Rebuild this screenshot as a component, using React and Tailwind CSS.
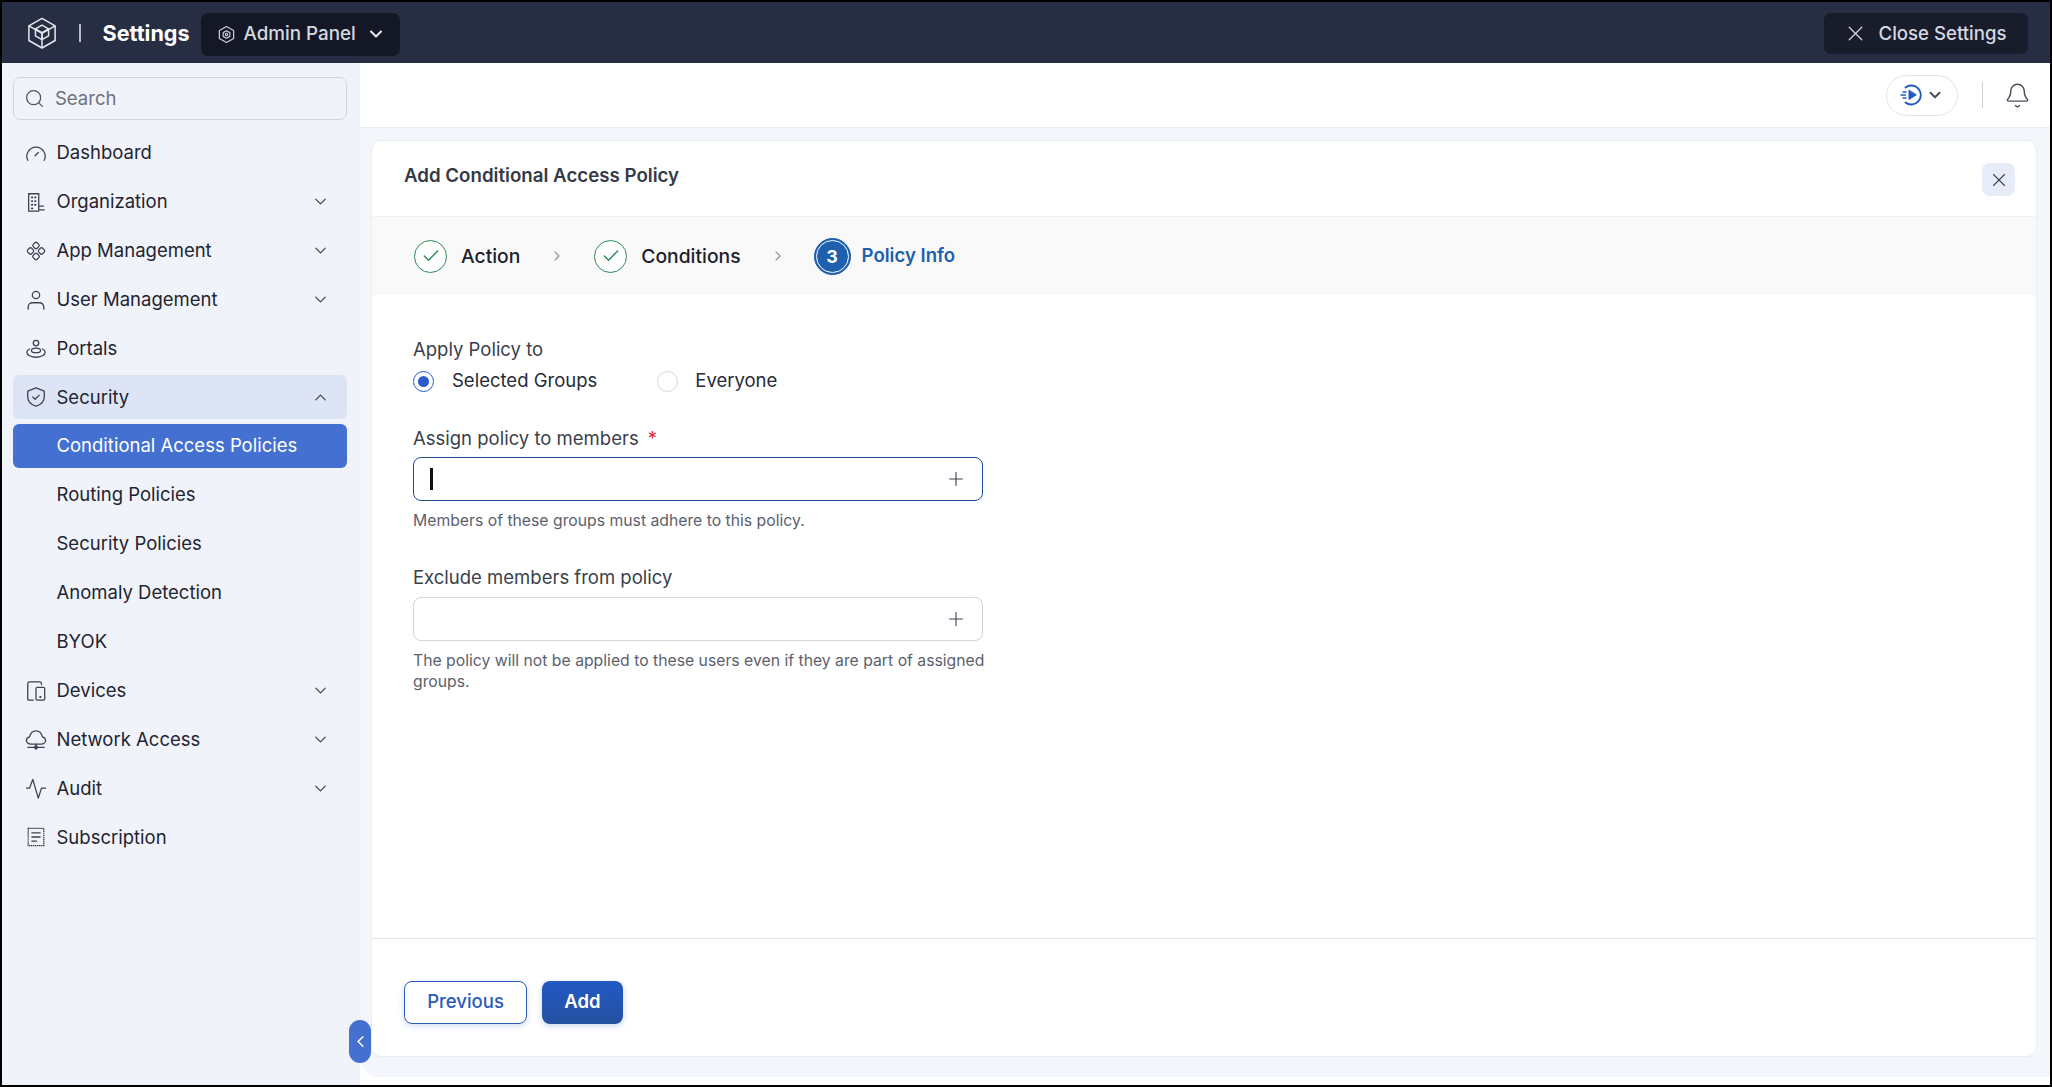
import React from "react";
import { ChevronDown, ChevronUp, ChevronRight, ChevronLeft, Search, X, Plus, Check, Bell } from "lucide-react";

const icon = "h-[22px] w-[22px] shrink-0 fill-none stroke-[#3c4250] stroke-[1.4]";

const LogoIcon = ({ className }) => (
  <svg viewBox="0 0 32 34" className={className} fill="none" stroke="currentColor" strokeWidth="1.6" strokeLinejoin="round">
    <path d="M16 1.5 30 9.5V25L16 33 2 25V9.5Z" />
    <path d="M2 9.5 16 17.5 30 9.5M16 17.5V33" />
    <path d="M16 8.5 23 12.5V20L16 24 9 20V12.5Z" />
    <path d="M9 12.5 16 16.5 23 12.5M16 16.5V24" />
  </svg>
);

const GaugeIcon = () => (
  <svg viewBox="0 0 24 24" className={icon}>
    <path d="M3 20a10 10 0 1 1 18 0" strokeLinecap="round" />
    <path d="m11 15 3.5-3.5" strokeLinecap="round" />
  </svg>
);
const OrgIcon = () => (
  <svg viewBox="0 0 24 24" className={icon}>
    <path d="M15 20.5V3H4v19h11M15 20.5h6M15 16.5h5" strokeLinecap="round" />
    <path d="M7.5 7h.5M11 7h.5M7.5 11h.5M11 11h.5M7.5 15h.5M11 15h.5M7.5 19h.5" strokeWidth="2" strokeLinecap="round" />
  </svg>
);
const AppIcon = () => (
  <svg viewBox="0 0 24 24" className={icon}>
    <rect x="9" y="3" width="6" height="6" rx="1.800" transform="rotate(45 12 6)" />
    <rect x="3" y="9" width="6" height="6" rx="1.800" transform="rotate(45 6 12)" />
    <rect x="15" y="9" width="6" height="6" rx="1.800" transform="rotate(45 18 12)" />
    <rect x="9" y="15" width="6" height="6" rx="1.800" transform="rotate(45 12 18)" />
  </svg>
);
const UserIcon = () => (
  <svg viewBox="0 0 24 24" className={icon}>
    <circle cx="12" cy="6.500" r="4" />
    <path d="M3.500 22v-2.500a4.500 4.500 0 0 1 4.500-4.500h8a4.500 4.500 0 0 1 4.500 4.500V22" strokeLinecap="round" />
  </svg>
);
const PortalIcon = () => (
  <svg viewBox="0 0 24 24" className={icon}>
    <circle cx="12" cy="5.500" r="3" />
    <path d="M7 13.500c0-1.500 1.500-2.500 5-2.500s5 1 5 2.500c0 1.500-2 2.500-5 2.500s-5-1-5-2.500Z" />
    <path d="M5 12c-1.800.8-3 2-3 3.500C2 18.500 6.500 21 12 21s10-2.500 10-5.500c0-1.500-1.200-2.700-3-3.500" strokeLinecap="round" />
  </svg>
);
const ShieldIcon = () => (
  <svg viewBox="0 0 24 24" className={icon}>
    <path d="M12 2 21 5.500V12c0 5-4 8.500-9 10-5-1.500-9-5-9-10V5.500Z" strokeLinejoin="round" />
    <path d="m8.500 12 2.500 2.500 4.500-4.500" strokeLinecap="round" strokeLinejoin="round" />
  </svg>
);
const DeviceIcon = () => (
  <svg viewBox="0 0 24 24" className={icon}>
    <path d="M18 5V4a2 2 0 0 0-2-2H5a2 2 0 0 0-2 2v17a1 1 0 0 0 1 1h5" strokeLinecap="round" />
    <rect x="12" y="8" width="9.500" height="14" rx="1.500" />
    <path d="M16.500 18.500h.5" strokeWidth="2" strokeLinecap="round" />
  </svg>
);
const CloudIcon = () => (
  <svg viewBox="0 0 24 24" className={icon}>
    <path d="M6.500 16.500C3.500 16.500 1.500 14.500 1.500 12.500s1.500-3.500 3.500-4C6 4.500 9 2 12 2s6 2.500 7 6.500c2 .5 3.500 2 3.500 4s-2 4-5 4Z" strokeLinejoin="round" />
    <path d="M12 16.500V22M3 20h18" strokeLinecap="round" />
    <circle cx="12" cy="20" r="1.500" />
  </svg>
);
const AuditIcon = () => (
  <svg viewBox="0 0 24 24" className={icon}>
    <path d="M1.500 11H5L8.500 1.500l6 20.500 3.500-11h4.500" strokeLinecap="round" strokeLinejoin="round" />
  </svg>
);
const ReceiptIcon = () => (
  <svg viewBox="0 0 24 24" className={icon}>
    <path d="M3.500 2.500h17v19h-17Z" strokeDasharray="1.600 0.600" />
    <path d="M7.500 7.500h9M7.500 12h9M7.500 16.500h5" strokeLinecap="round" />
  </svg>
);

const AdminHexIcon = () => (
  <svg viewBox="0 0 20 20" className="h-[19px] w-[19px]" fill="none" stroke="#c9ccd6" strokeWidth="1.300" strokeLinejoin="round">
    <path d="M10 1.500 17.500 5.700v8.600L10 18.500 2.500 14.300V5.700Z" />
    <path d="M10 6 13.500 8v4L10 14 6.500 12V8Z" />
    <circle cx="10" cy="10" r="1.200" />
  </svg>
);

const MeetIcon = () => (
  <svg viewBox="0 0 24 24" className="h-[24px] w-[24px]" fill="none" stroke="#2259bd" strokeWidth="1.900" strokeLinecap="round">
    <path d="M6.500 4.500A9.500 9.500 0 1 1 6.500 19.500" />
    <path d="M10 7.500v9l7-4.500Z" fill="#2259bd" strokeWidth="1" strokeLinejoin="round" />
    <path d="M4 9h3M2 12h4.500M4 15h3" strokeWidth="1.500" />
  </svg>
);

const navItems = [
  { label: "Dashboard", Icon: GaugeIcon },
  { label: "Organization", Icon: OrgIcon, more: true },
  { label: "App Management", Icon: AppIcon, more: true },
  { label: "User Management", Icon: UserIcon, more: true },
  { label: "Portals", Icon: PortalIcon },
  { label: "Security", Icon: ShieldIcon, open: true },
  { label: "Conditional Access Policies", sub: true, active: true },
  { label: "Routing Policies", sub: true },
  { label: "Security Policies", sub: true },
  { label: "Anomaly Detection", sub: true },
  { label: "BYOK", sub: true },
  { label: "Devices", Icon: DeviceIcon, more: true },
  { label: "Network Access", Icon: CloudIcon, more: true },
  { label: "Audit", Icon: AuditIcon, more: true },
  { label: "Subscription", Icon: ReceiptIcon },
];

function NavRow({ item }) {
  const { label, Icon, more, open, sub, active } = item;
  return (
    <div
      className={`flex h-[44px] items-center rounded-[6px] text-[18.5px] ${sub ? "pl-[43.5px]" : "gap-[9.5px] pl-[12px]"} ${
        active ? "bg-[#4471d1] text-white" : "text-[#1f2430]"
      } ${open ? "bg-[#dce4f5]" : ""}`}
    >
      {Icon && <Icon />}
      <span className="flex-1">{label}</span>
      {more && <ChevronDown className="mr-[17px] h-[19px] w-[19px] text-[#3c4250]" strokeWidth={1.5} />}
      {open && <ChevronUp className="mr-[17px] h-[19px] w-[19px] text-[#3c4250]" strokeWidth={1.5} />}
    </div>
  );
}

function Step({ n, label, done }) {
  if (done) {
    return (
      <div className="flex items-center gap-[14px]">
        <span className="flex h-[33px] w-[33px] items-center justify-center rounded-full border-[1.5px] border-[#2b8a57] bg-white">
          <Check className="h-[20px] w-[20px] text-[#2b8a57]" strokeWidth={1.7} />
        </span>
        <span className="text-[19.300px] font-medium text-[#1c2029]">{label}</span>
      </div>
    );
  }
  return (
    <div className="flex items-center gap-[11px]">
      <span className="flex h-[37px] w-[37px] items-center justify-center rounded-full border border-[#1e5fae] bg-[#1e5fae] text-[18px] font-bold text-white outline outline-1 -outline-offset-3 outline-white">
        {n}
      </span>
      <span className="text-[18.600px] font-semibold text-[#1e5fae]">{label}</span>
    </div>
  );
}

function PickerInput({ focused }) {
  return (
    <div
      className={`flex h-[44px] w-[570px] items-center rounded-[8px] border-[1.5px] pl-[16px] pr-[15px] ${
        focused ? "border-[#1f4f98]" : "border-[#d4d5d9]"
      }`}
    >
      {focused && <span className="h-[22px] w-[2.5px] bg-[#111]" />}
      <Plus className="ml-auto h-[22px] w-[22px] text-[#3c4250]" strokeWidth={1.2} />
    </div>
  );
}

export default function App() {
  return (
    <div
      className="box-border flex h-[1087px] w-[2052px] flex-col overflow-hidden border-2 border-black bg-white"
      style={{ fontFamily: "Inter, 'Noto Sans', sans-serif" }}
    >
      {/* Top bar */}
      <header className="flex h-[61px] shrink-0 items-center bg-[#272d43] pl-[25px] pr-[22px]">
        <LogoIcon className="h-[34px] w-[30px] text-[#e6e8ee]" />
        <span className="ml-[22px] h-[18px] w-[1.5px] bg-[#b6bac6]" />
        <span className="ml-[22px] mt-[1px] text-[21.600px] font-bold text-white">Settings</span>
        <button className="ml-[11px] mt-[3px] flex h-[43px] w-[199px] items-center rounded-[7px] bg-[#141826] pl-[16px] text-[18.800px] font-medium text-[#d5d8e0]">
          <AdminHexIcon />
          <span className="ml-[8px]">Admin Panel</span>
          <ChevronDown className="ml-[10px] h-[20px] w-[20px] text-[#e6e8ee]" strokeWidth={2.4} />
        </button>
        <button className="ml-auto mt-[2px] flex h-[41px] w-[204px] items-center justify-center gap-[11px] rounded-[7px] bg-[#181c2b] pr-[3px] text-[18.600px] font-medium text-[#d5d8e0]">
          <X className="h-[25px] w-[25px]" strokeWidth={1.2} />
          Close Settings
        </button>
      </header>

      <div className="flex min-h-0 flex-1">
        {/* Sidebar */}
        <aside className="relative flex w-[358px] shrink-0 flex-col bg-[#f1f3fa] pl-[11px] pr-[13px] pt-[14px]">
          <div className="flex h-[43px] items-center gap-[10px] rounded-[7px] border-[1.5px] border-[#d3d5dc] px-[10px] text-[18.500px] text-[#6b7180]">
            <Search className="h-[21px] w-[21px] text-[#4d5361]" strokeWidth={1.4} />
            Search
          </div>
          <nav className="mt-[11px] flex flex-col gap-[4.9px]">
            {navItems.map((item) => (
              <NavRow key={item.label} item={item} />
            ))}
          </nav>
          <button className="absolute bottom-[22px] right-[-11px] z-10 flex h-[43px] w-[22px] items-center justify-center rounded-full bg-[#4471d1] text-white">
            <ChevronLeft className="h-[19px] w-[19px]" strokeWidth={1.8} />
          </button>
        </aside>

        {/* Main */}
        <main className="flex min-w-0 flex-1 flex-col">
          <div className="flex h-[65px] shrink-0 items-center justify-end border-b border-[#e9edf4] pr-[19px]">
            <div className="flex h-[41px] w-[72px] items-center justify-center gap-[3px] rounded-full border-[1.5px] border-[#e3e4e8]">
              <MeetIcon />
              <ChevronDown className="h-[18px] w-[18px] text-[#4a4f5c]" strokeWidth={2.6} />
            </div>
            <span className="ml-[24px] h-[26px] w-px bg-[#cfd1d6]" />
            <Bell className="ml-[21.500px] h-[27px] w-[27px] text-[#4a4f5c]" strokeWidth={1.3} />
          </div>

          <div className="mb-[8px] flex min-h-0 flex-1 flex-col rounded-bl-[20px] bg-[#f3f6fb] pb-[20px] pl-[11px] pr-[13px] pt-[12px]">
            <section className="flex min-h-0 flex-1 flex-col rounded-[10px] border border-[#e9edf4] bg-white">
              <div className="flex h-[75px] shrink-0 items-center justify-between pl-[32px] pr-[21px]">
                <h1 className="mb-[4px] text-[18.700px] font-semibold text-[#343a46]">Add Conditional Access Policy</h1>
                <button className="mt-[2px] flex h-[33px] w-[33px] items-center justify-center rounded-[8px] bg-[#e8ecf8] text-[#3c4250]">
                  <X className="h-[22px] w-[22px]" strokeWidth={1.2} />
                </button>
              </div>

              <div className="flex h-[79px] shrink-0 items-center border-t border-[#f0f0f2] bg-[#f9f9f9] pl-[42px]">
                <Step label="Action" done />
                <ChevronRight className="ml-[29px] mr-[29px] h-[16px] w-[16px] text-[#8c9099]" strokeWidth={1.6} />
                <Step label="Conditions" done />
                <ChevronRight className="ml-[29px] mr-[28px] h-[16px] w-[16px] text-[#8c9099]" strokeWidth={1.6} />
                <Step n={3} label="Policy Info" />
              </div>

              <div className="flex-1 pl-[41px] pt-[43px] text-[18.500px] text-[#3a3f4b]">
                <div className="leading-[22px]">Apply Policy to</div>
                <div className="mt-[10px] flex h-[22px] items-center text-[#262b36]">
                  <span className="flex h-[21px] w-[21px] items-center justify-center rounded-full border-[1.5px] border-[#2a5bcb]">
                    <span className="h-[11px] w-[11px] rounded-full bg-[#2a5bcb]" />
                  </span>
                  <span className="ml-[18px]">Selected Groups</span>
                  <span className="ml-[60px] h-[21px] w-[21px] rounded-full border-[1.5px] border-[#d6d7db]" />
                  <span className="ml-[17px]">Everyone</span>
                </div>

                <div className="mt-[35px] leading-[22px]">
                  Assign policy to members <span className="ml-[4px] text-[#e0282e]">*</span>
                </div>
                <div className="mt-[8px]">
                  <PickerInput focused />
                </div>
                <p className="mt-[10px] text-[15.750px] leading-[19px] text-[#5c616d]">Members of these groups must adhere to this policy.</p>

                <div className="mt-[36px] leading-[22px]">Exclude members from policy</div>
                <div className="mt-[9px]">
                  <PickerInput />
                </div>
                <p className="mt-[9px] w-[580px] text-[15.750px] leading-[21px] text-[#5c616d]">
                  The policy will not be applied to these users even if they are part of assigned groups.
                </p>
              </div>

              <div className="flex h-[118px] shrink-0 items-center gap-[15px] border-t-[1.5px] border-[#e4e5e9] pt-[9.500px] pl-[32px]">
                <button className="h-[43px] w-[123px] rounded-[8px] border-[1.5px] border-[#2a5bb8] bg-white text-[18.500px] font-medium text-[#2a5bb8] shadow-[0_2px_6px_rgba(42,91,184,0.2)]">
                  Previous
                </button>
                <button className="h-[43px] w-[81px] rounded-[8px] bg-gradient-to-b from-[#2359c4] to-[#24509f] text-[18.500px] font-semibold text-white shadow-[0_2px_6px_rgba(42,91,184,0.25)]">
                  Add
                </button>
              </div>
            </section>
          </div>
        </main>
      </div>
    </div>
  );
}
